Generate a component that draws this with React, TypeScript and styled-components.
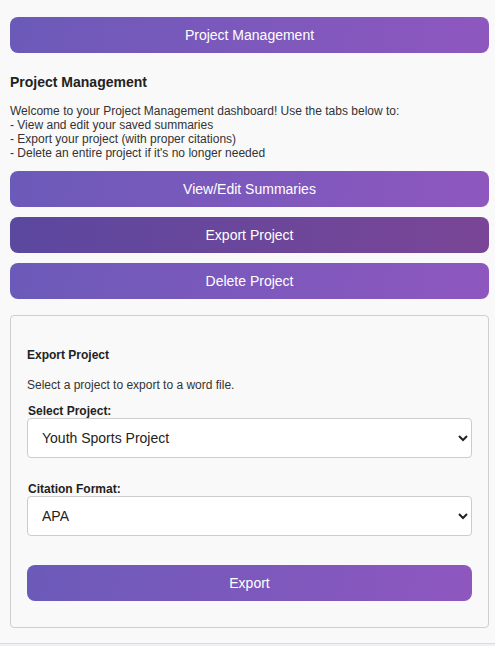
import React, { useState } from "react";
import styled, { createGlobalStyle } from "styled-components";

const GlobalStyle = createGlobalStyle`
  html, body {
    margin: 0;
    padding: 0;
    background: #f9f9f9;
    font-family: "Liberation Sans", Arial, sans-serif;
    color: #333;
  }
  * { box-sizing: border-box; }
`;

const Page = styled.div`
  padding: 17px 6px 15px 10px;
`;

const GradientButton = styled.button<{ $active?: boolean }>`
  display: block;
  width: 100%;
  height: 36px;
  border: none;
  border-radius: 8px;
  font-family: "Liberation Sans", Arial, sans-serif;
  font-size: 14px;
  color: #fff;
  cursor: pointer;
  background: ${(p) =>
    p.$active
      ? "linear-gradient(100deg, #5b489f 0%, #7a4596 100%)"
      : "linear-gradient(100deg, #6b5ab9 0%, #8e57bf 100%)"};
`;

const Title = styled.h3`
  font-size: 14px;
  font-weight: bold;
  margin: 21px 0 0;
  line-height: 16px;
  color: #222;
`;

const Intro = styled.p`
  font-size: 12px;
  line-height: 14px;
  margin: 14px 0 11px;
  color: #333;
`;

const TabList = styled.div`
  display: flex;
  flex-direction: column;
  gap: 10px;
`;

const Panel = styled.div`
  margin-top: 16px;
  border: 1px solid #cfcfcf;
  border-radius: 4px;
  padding: 16px 16px 26px;
`;

const PanelTitle = styled.h4`
  font-size: 12px;
  font-weight: bold;
  line-height: 14px;
  margin: 16px 0 16px;
  color: #222;
`;

const PanelText = styled.p`
  font-size: 12px;
  line-height: 14px;
  margin: 0 0 12px;
  color: #333;
`;

const Field = styled.div<{ $last?: boolean }>`
  margin-bottom: ${(p) => (p.$last ? "29px" : "24px")};
`;

const Label = styled.label`
  display: block;
  font-size: 12px;
  font-weight: bold;
  line-height: 14px;
  padding-left: 1px;
  color: #222;
`;

const Select = styled.select`
  display: block;
  width: 100%;
  height: 40px;
  padding: 0 10px;
  font-family: "Liberation Sans", Arial, sans-serif;
  font-size: 14px;
  color: #222;
  background: #fff;
  border: 1px solid #ccc;
  border-radius: 4px;
`;

const Footer = styled.div`
  height: 4px;
  border-top: 1px solid #dcdcdc;
  background: #f3eef6;
`;

export default function App() {
  const [tab] = useState("export");
  return (
    <>
      <GlobalStyle />
      <Page>
        <GradientButton>Project Management</GradientButton>
        <Title>Project Management</Title>
        <Intro>
          Welcome to your Project Management dashboard! Use the tabs below to:
          <br />- View and edit your saved summaries
          <br />- Export your project (with proper citations)
          <br />- Delete an entire project if it's no longer needed
        </Intro>
        <TabList>
          <GradientButton $active={tab === "view"}>View/Edit Summaries</GradientButton>
          <GradientButton $active={tab === "export"}>Export Project</GradientButton>
          <GradientButton $active={tab === "delete"}>Delete Project</GradientButton>
        </TabList>
        <Panel>
          <PanelTitle>Export Project</PanelTitle>
          <PanelText>Select a project to export to a word file.</PanelText>
          <Field>
            <Label htmlFor="proj">Select Project:</Label>
            <Select id="proj" defaultValue="youth">
              <option value="youth">Youth Sports Project</option>
            </Select>
          </Field>
          <Field $last>
            <Label htmlFor="cite">Citation Format:</Label>
            <Select id="cite" defaultValue="apa">
              <option value="apa">APA</option>
              <option value="mla">MLA</option>
            </Select>
          </Field>
          <GradientButton>Export</GradientButton>
        </Panel>
      </Page>
      <Footer />
    </>
  );
}
